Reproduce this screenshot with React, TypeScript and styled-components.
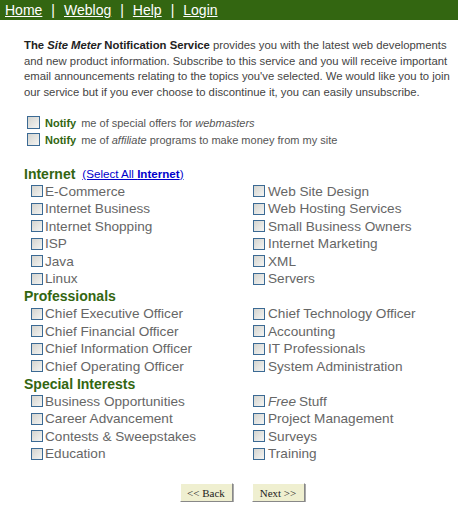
import React from "react";
import styled, { createGlobalStyle } from "styled-components";

const GlobalStyle = createGlobalStyle`
  body {
    margin: 0;
    background: #fff;
    font-family: "Liberation Sans", Arial, sans-serif;
  }
`;

const NavBar = styled.div`
  background: #336611;
  height: 20px;
  display: flex;
  align-items: center;
  padding-left: 5px;
  font-size: 14px;
  color: #fff;
`;

const NavLink = styled.a`
  color: #fff;
  text-decoration: underline;
`;

const NavSep = styled.span`
  margin: 0 9px;
`;

const Content = styled.div`
  padding: 18px 4px 0 24px;
`;

const Intro = styled.p`
  margin: 0;
  font-size: 11.3px;
  line-height: 15.7px;
  color: #444;
`;

const Strong = styled.b`
  color: #222;
`;

const NotifyList = styled.div`
  margin-top: 16px;
  padding-left: 3px;
  display: flex;
  flex-direction: column;
  gap: 5px;
`;

const NotifyRow = styled.div`
  display: flex;
  align-items: center;
  font-size: 11px;
  color: #555;
  height: 12px;
`;

const NotifyWord = styled.b`
  color: #336611;
  margin: 0 5px;
`;

const Box = styled.span<{ $size?: number }>`
  display: inline-block;
  box-sizing: border-box;
  width: ${(p) => p.$size ?? 12}px;
  height: ${(p) => p.$size ?? 12}px;
  border: 1px solid #3b6a94;
  background: linear-gradient(135deg, #d4d4cf 0%, #f4f4f2 100%);
  flex-shrink: 0;
`;

const Grid = styled.div`
  margin-top: 19px;
  display: grid;
  grid-template-columns: 229px 1fr;
  grid-auto-rows: 17.5px;
`;

const Heading = styled.div`
  grid-column: 1 / span 2;
  font-size: 14px;
  font-weight: bold;
  color: #336611;
  display: flex;
  align-items: center;
`;

const SelectAll = styled.a`
  font-size: 11.6px;
  font-weight: normal;
  color: #0000cc;
  text-decoration: underline;
  margin-left: 7px;
`;

const Item = styled.div<{ $col: number }>`
  grid-column: ${(p) => p.$col};
  display: flex;
  align-items: center;
  padding-left: ${(p) => (p.$col === 1 ? 7 : 0)}px;
  font-size: 13.6px;
  color: #666;
  gap: ${(p) => (p.$col === 1 ? 2 : 3)}px;
  white-space: nowrap;
`;

const Buttons = styled.div`
  display: flex;
  justify-content: center;
  gap: 19px;
  margin-top: 21px;
  padding-left: 6px;
`;

const Btn = styled.button`
  font-family: "Liberation Serif", "Times New Roman", serif;
  font-size: 11px;
  color: #222;
  background: #efefd0;
  border: 1px solid;
  border-color: #fff #888 #888 #fff;
  box-shadow: 1px 1px 0 #aaa;
  height: 19px;
  width: 53px;
  padding: 0;
`;

type Row = [React.ReactNode, React.ReactNode];

const sections: { title: string; select?: boolean; rows: Row[] }[] = [
  {
    title: "Internet",
    select: true,
    rows: [
      ["E-Commerce", "Web Site Design"],
      ["Internet Business", "Web Hosting Services"],
      ["Internet Shopping", "Small Business Owners"],
      ["ISP", "Internet Marketing"],
      ["Java", "XML"],
      ["Linux", "Servers"],
    ],
  },
  {
    title: "Professionals",
    rows: [
      ["Chief Executive Officer", "Chief Technology Officer"],
      ["Chief Financial Officer", "Accounting"],
      ["Chief Information Officer", "IT Professionals"],
      ["Chief Operating Officer", "System Administration"],
    ],
  },
  {
    title: "Special Interests",
    rows: [
      ["Business Opportunities", <><i>Free</i> Stuff</>],
      ["Career Advancement", "Project Management"],
      ["Contests & Sweepstakes", "Surveys"],
      ["Education", "Training"],
    ],
  },
];

export default function App() {
  return (
    <>
      <GlobalStyle />
      <NavBar>
        <NavLink>Home</NavLink>
        <NavSep>|</NavSep>
        <NavLink>Weblog</NavLink>
        <NavSep>|</NavSep>
        <NavLink>Help</NavLink>
        <NavSep>|</NavSep>
        <NavLink>Login</NavLink>
      </NavBar>
      <Content>
        <Intro>
          <Strong>
            The <i>Site Meter</i> Notification Service
          </Strong>{" "}
          provides you with the latest web developments and new product information. Subscribe to
          this service and you will receive important email announcements relating to the topics
          you've selected. We would like you to join our service but if you ever choose to
          discontinue it, you can easily unsubscribe.
        </Intro>
        <NotifyList>
          <NotifyRow>
            <Box $size={13} />
            <NotifyWord>Notify</NotifyWord> me of special offers for&nbsp;<i>webmasters</i>
          </NotifyRow>
          <NotifyRow>
            <Box $size={13} />
            <NotifyWord>Notify</NotifyWord> me of&nbsp;<i>affiliate</i>&nbsp;programs to make money
            from my site
          </NotifyRow>
        </NotifyList>
        <Grid>
          {sections.map((s) => (
            <React.Fragment key={s.title}>
              <Heading>
                {s.title}
                {s.select && (
                  <SelectAll>
                    (Select All <b>Internet</b>)
                  </SelectAll>
                )}
              </Heading>
              {s.rows.map((r, i) => (
                <React.Fragment key={i}>
                  <Item $col={1}>
                    <Box />
                    {r[0]}
                  </Item>
                  <Item $col={2}>
                    <Box />
                    {r[1]}
                  </Item>
                </React.Fragment>
              ))}
            </React.Fragment>
          ))}
        </Grid>
        <Buttons>
          <Btn>&lt;&lt; Back</Btn>
          <Btn>Next &gt;&gt;</Btn>
        </Buttons>
      </Content>
    </>
  );
}
